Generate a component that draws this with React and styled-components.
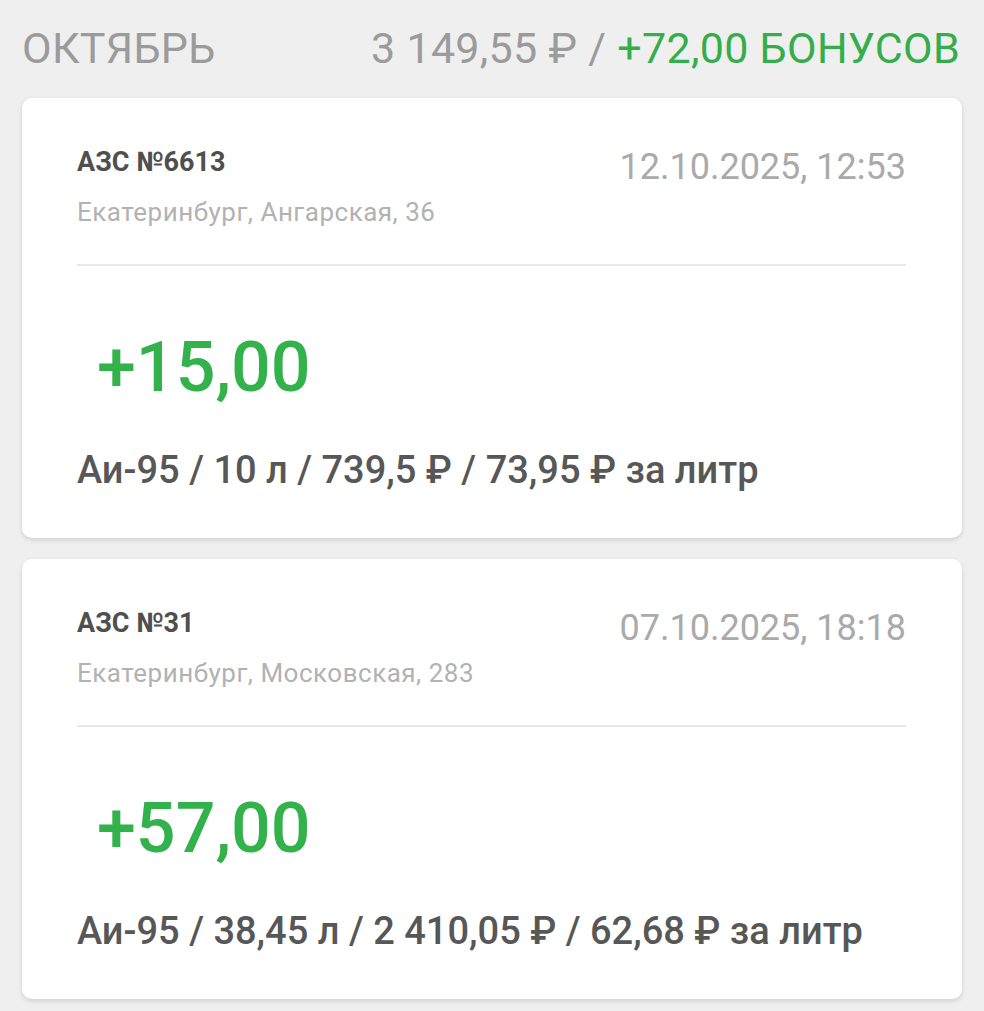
import React from "react";
import styled, { createGlobalStyle } from "styled-components";

const GlobalStyle = createGlobalStyle`
  html, body {
    margin: 0;
    padding: 0;
    background: #efefef;
    font-family: Roboto, "Noto Sans", "Liberation Sans", sans-serif;
  }
`;

const Page = styled.div`
  padding: 27px 22px 14px 22px;
  display: flex;
  flex-direction: column;
`;

const MonthHeader = styled.div`
  display: flex;
  justify-content: space-between;
  align-items: flex-start;
  font-size: 43px;
  line-height: 43px;
  letter-spacing: 0.3px;
  color: #9b9b9b;
  margin-bottom: 28px;
  padding-right: 2px;
`;

const Green = styled.span`
  color: #34ad4b;
`;

const List = styled.div`
  display: flex;
  flex-direction: column;
  gap: 21px;
`;

const Card = styled.div`
  background: #ffffff;
  border-radius: 10px;
  box-shadow: 0 2px 5px rgba(0, 0, 0, 0.13);
  padding: 51px 56px 49px 55px;
  display: flex;
  flex-direction: column;
`;

const TopRow = styled.div`
  display: flex;
  justify-content: space-between;
  align-items: flex-start;
`;

const Station = styled.div`
  font-size: 27px;
  line-height: 27px;
  font-weight: 700;
  color: #4f4f4f;
`;

const DateText = styled.div`
  font-size: 36px;
  line-height: 36px;
  color: #aaaaaa;
`;

const Address = styled.div`
  font-size: 26px;
  line-height: 26px;
  letter-spacing: 0.5px;
  color: #b2b2b2;
  margin-top: 14px;
`;

const Divider = styled.div`
  height: 2px;
  background: #e8e8e8;
  margin-top: 39px;
`;

const Amount = styled.div`
  font-size: 70px;
  line-height: 70px;
  font-weight: 500;
  color: #33b24b;
  margin-top: 66px;
  padding-left: 20px;
`;

const Details = styled.div`
  font-size: 38px;
  line-height: 38px;
  font-weight: 500;
  color: #575757;
  margin-top: 49px;
`;

const items = [
  {
    station: "АЗС №6613",
    date: "12.10.2025, 12:53",
    address: "Екатеринбург, Ангарская, 36",
    amount: "+15,00",
    details: "Аи-95 / 10 л / 739,5 ₽ / 73,95 ₽ за литр",
  },
  {
    station: "АЗС №31",
    date: "07.10.2025, 18:18",
    address: "Екатеринбург, Московская, 283",
    amount: "+57,00",
    details: "Аи-95 / 38,45 л / 2 410,05 ₽ / 62,68 ₽ за литр",
  },
];

export default function App() {
  return (
    <>
      <GlobalStyle />
      <Page>
        <MonthHeader>
          <span>ОКТЯБРЬ</span>
          <span>
            3 149,55 ₽ / <Green>+72,00 БОНУСОВ</Green>
          </span>
        </MonthHeader>
        <List>
          {items.map((it) => (
            <Card key={it.station}>
              <TopRow>
                <Station>{it.station}</Station>
                <DateText>{it.date}</DateText>
              </TopRow>
              <Address>{it.address}</Address>
              <Divider />
              <Amount>{it.amount}</Amount>
              <Details>{it.details}</Details>
            </Card>
          ))}
        </List>
      </Page>
    </>
  );
}
